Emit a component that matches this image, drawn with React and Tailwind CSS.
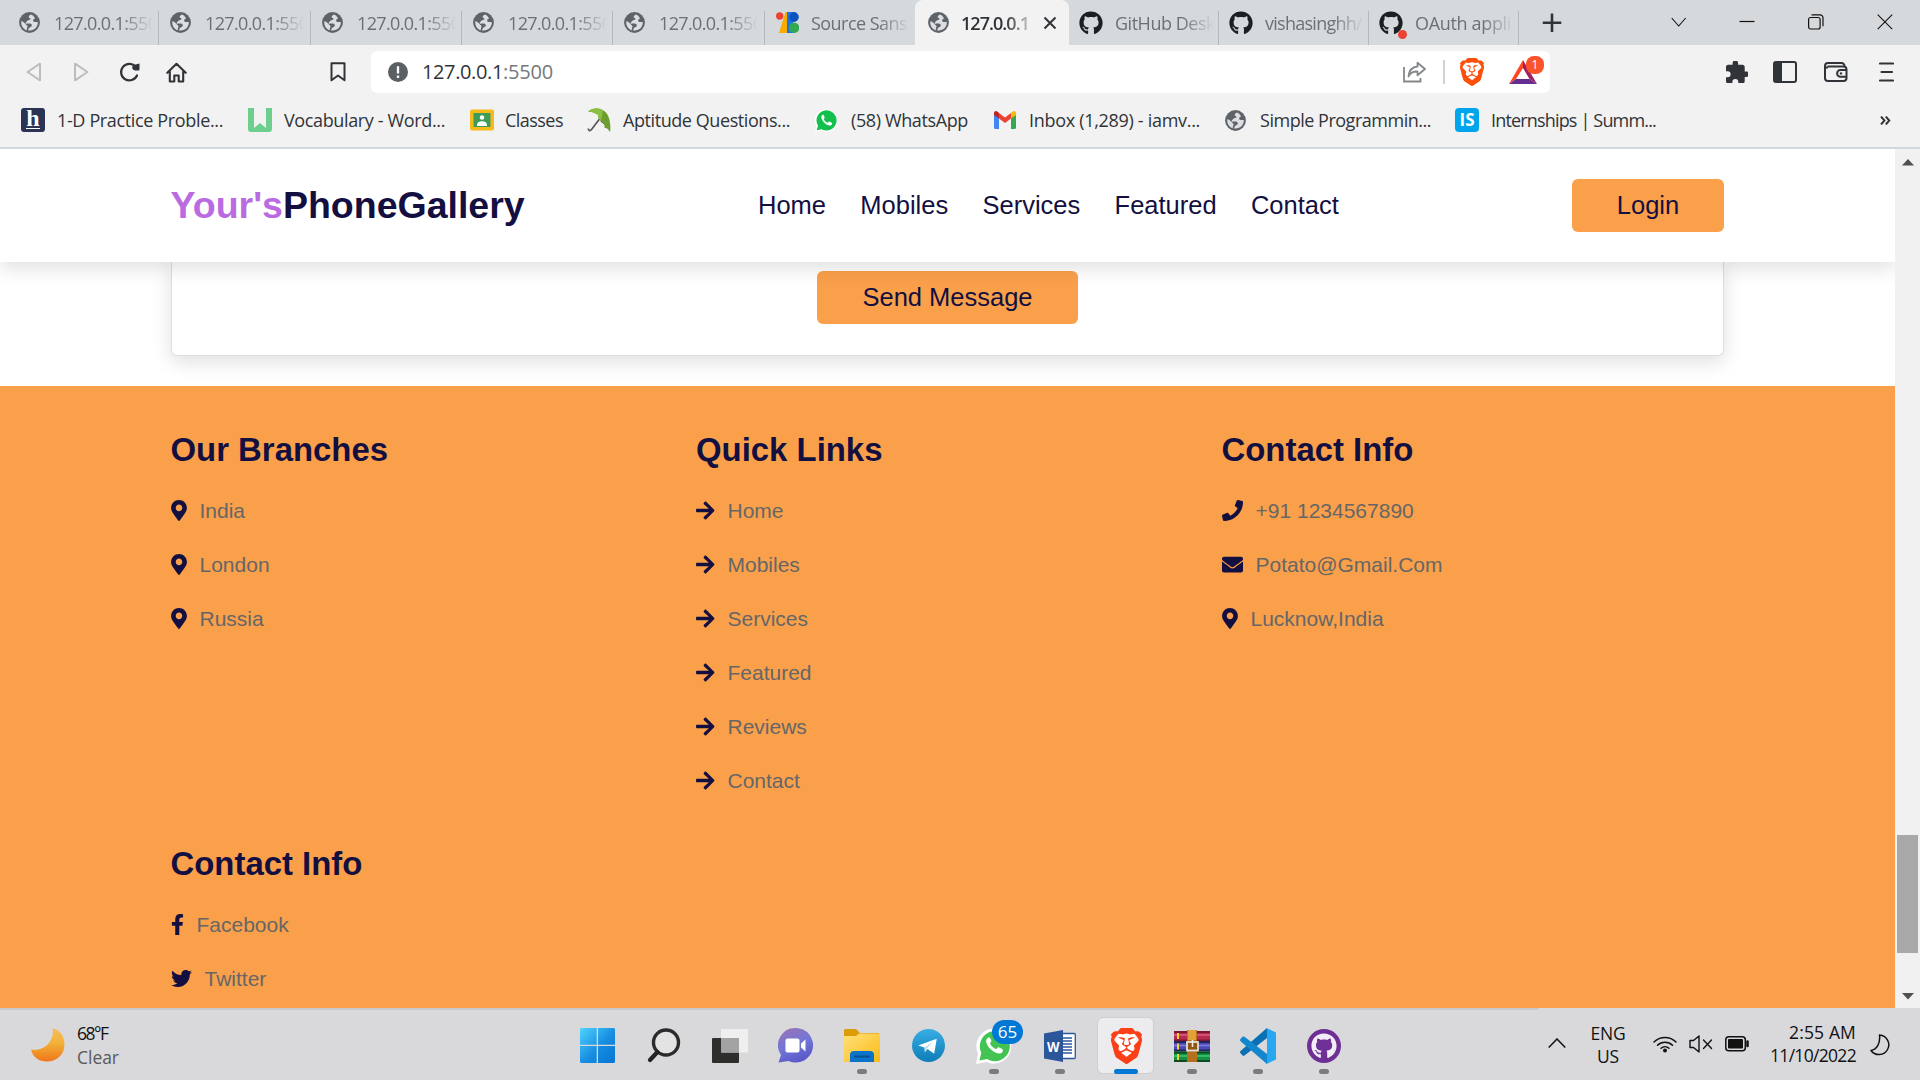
import React, { useLayoutEffect, useRef, useState } from "react";
import { FaMapMarkerAlt, FaArrowRight, FaPhone, FaEnvelope, FaFacebookF, FaTwitter, FaGithub } from "react-icons/fa";
import { SiBrave } from "react-icons/si";

/* Inline text whose letter spacing is adjusted so that it spans `w` pixels. */
function Fit({ w, className = "", children }) {
  const ref = useRef(null);
  const [ls, setLs] = useState(0);
  useLayoutEffect(() => {
    const natural = ref.current.getBoundingClientRect().width;
    setLs((w - natural) / children.length);
  }, [w, children]);
  return (
    <span ref={ref} className={"inline-block whitespace-pre " + className} style={{ letterSpacing: ls + "px" }}>
      {children}
    </span>
  );
}

const Globe = ({ className = "" }) => (
  <svg viewBox="0 0 21 21" className={"h-[21px] w-[21px] shrink-0 " + className}>
    <circle cx="10.5" cy="10.5" r="10.4" fill="#5f6368" />
    <path d="M11.8 2.4C9.6 3.6 9.1 5.2 10.2 5.8c1 .6 2.300 1.200.4 2-2 .7-2.500 1.300-3.700 2.600-.9 1 .2 1.500 1.500 1.200 2-.4 3.800-.2 4.300 1.100.5 1.300-.3 1.900-1.600 2.500-1.200.6-1.800 1.600-2 3.300 6 .8 9.900-3.400 9.700-8.400l-2.600-.1c-1.800.1-2.300-.9-1.900-2 .3-1 .9-1.300 1.800-1.500C14.900 4 13.500 2.900 11.800 2.400z" fill="#dcdfe2" />
    <path d="M2.300 9.300c1.600.2 3.200 1.300 4.200 2.600.9 1.200 1.900 1.200 2 2.500 0 1.100-.9 1.500-.8 4C4.200 17.300 1.800 13.500 2.300 9.300z" fill="#dcdfe2" />
  </svg>
);

const SourceFont = () => (
  <svg viewBox="0 0 23 21" className="h-[21px] w-[23px] shrink-0">
    <path d="M9.500 0H15v21H3z" fill="#f9ab00" />
    <circle cx="3.700" cy="4" r="3.700" fill="#ea4335" />
    <path d="M11 0h6.500a5 5 0 0 1 0 10H17v11h-6z" fill="#1a73e8" />
    <circle cx="18" cy="5" r="4.700" fill="#0d52bf" />
    <circle cx="18" cy="15.700" r="5.300" fill="#34a853" />
    <path d="M11 10h6.500a5.300 5.300 0 0 0-1 10.500L15 21h-4z" fill="#1a73e8" />
  </svg>
);

const Tab = ({ icon, title, w, width, iconLast }) => (
  <div className={"flex h-[45px] shrink-0 items-center pl-[11px] " + width}>
    <div className="flex w-[24px] shrink-0">{icon}</div>
    <div className="ml-[11px] w-[99px] shrink-0 overflow-hidden text-[18px] leading-[24px] text-[#6c7075] [mask-image:linear-gradient(90deg,#000_68%,transparent)]">
      <Fit w={w}>{title}</Fit>
    </div>
    {!iconLast && <div className="mt-auto ml-auto h-[34px] w-[1px] bg-[#b4b8bc]" />}
  </div>
);

const Octo = () => <FaGithub className="-ml-[1px] h-[24px] w-[24px] text-[#1b1f23]" />;

function TabStrip() {
  return (
    <div className="flex h-[45px] bg-[#d5d9dc]">
      <div className="flex pl-[8px]">
        <Tab icon={<Globe />} title="127.0.0.1:5500" w={113} width="w-[151px]" />
        <Tab icon={<Globe />} title="127.0.0.1:5500" w={113} width="w-[152px]" />
        <Tab icon={<Globe />} title="127.0.0.1:5500" w={113} width="w-[151px]" />
        <Tab icon={<Globe />} title="127.0.0.1:5500" w={113} width="w-[151px]" />
        <Tab icon={<Globe />} title="127.0.0.1:5500" w={113} width="w-[152px]" />
        <Tab icon={<SourceFont />} title="Source Sans" w={96} width="w-[150px]" iconLast />
        <div className="flex w-[154px] items-center rounded-t-[8px] bg-[#f2f2f2] pl-[13px]">
          <Globe />
          <div className="ml-[12px] w-[69px] text-[18px] leading-[24px] font-semibold text-[#303438] [mask-image:linear-gradient(90deg,#000_65%,#0003)]">
            <Fit w={68}>127.0.0.1</Fit>
          </div>
          <svg viewBox="0 0 14 14" className="ml-[13px] h-[14px] w-[14px]"><path d="M1.500 1.500l11 11M12.500 1.500l-11 11" stroke="#303438" strokeWidth="2" /></svg>
        </div>
        <Tab icon={<Octo />} title="GitHub Desk" w={100} width="w-[150px]" />
        <Tab icon={<Octo />} title="vishasinghh/" w={97} width="w-[150px]" />
        <Tab
          icon={<div className="relative"><Octo /><div className="absolute top-[19px] left-[18px] h-[9px] w-[9px] rounded-full bg-[#ea4335]" /></div>}
          title="OAuth appli" w={96} width="w-[150px]" />
      </div>
      <svg viewBox="0 0 20 20" className="mt-[13px] ml-[23px] h-[20px] w-[20px]"><path d="M10 .5v18.500M.8 9.800h18.500" stroke="#303438" strokeWidth="2.600" /></svg>
      <div className="ml-auto flex pr-[27px] pt-[14px]">
        <svg viewBox="0 0 16 16" className="h-[16px] w-[16px]"><path d="M.7 4l7 8 7-8" stroke="#111" fill="none" strokeWidth="1.100" /></svg>
        <svg viewBox="0 0 16 16" className="ml-[52px] h-[16px] w-[16px]"><path d="M.5 7.500h15" stroke="#111" fill="none" strokeWidth="1.200" /></svg>
        <svg viewBox="0 0 16 16" className="ml-[53px] h-[16px] w-[16px]"><rect x=".6" y="3.500" width="11.500" height="11.500" rx="2" stroke="#111" fill="none" strokeWidth="1.200" /><path d="M3.500.8h8.500a3 3 0 0 1 3 3v8.500" stroke="#111" fill="none" strokeWidth="1.200" /></svg>
        <svg viewBox="0 0 16 16" className="ml-[53px] h-[16px] w-[16px]"><path d="M.7.7l14.500 14.500M15.200.7L.7 15.200" stroke="#111" fill="none" strokeWidth="1.100" /></svg>
      </div>
    </div>
  );
}

const BraveLion = ({ className, color }) => (
  <div className={"relative shrink-0 " + className}>
    <svg viewBox="0 0 24 24" preserveAspectRatio="none" className="absolute inset-0 h-full w-full"><path d="M6 4h12l2 5-3 10-5 4-5-4L4 9z" fill="#fff" /></svg>
    <SiBrave preserveAspectRatio="none" viewBox="2 0 20 24" className={"absolute inset-0 h-full w-full " + color} />
  </div>
);

function Toolbar() {
  return (
    <div className="flex h-[54px] items-center bg-[#f2f2f2]">
      <svg viewBox="0 0 16 20" className="ml-[26px] h-[20px] w-[16px]"><path d="M14 1.700v16.600L1.500 10z" fill="none" stroke="#bdbdbd" strokeWidth="2" strokeLinejoin="round" /></svg>
      <svg viewBox="0 0 16 20" className="ml-[31px] h-[20px] w-[16px]"><path d="M2 1.700v16.600L14.500 10z" fill="none" stroke="#bdbdbd" strokeWidth="2" strokeLinejoin="round" /></svg>
      <svg viewBox="0 0 21 21" className="ml-[30px] h-[21px] w-[21px]"><path d="M16.500 4.500A8.300 8.300 0 1 0 18 13.500" fill="none" stroke="#303438" strokeWidth="2.200" strokeLinecap="round" /><path d="M20.500 1.500v6a1 1 0 0 1-1 .9h-3.500a3 3 0 0 1-1.500-5.500z" fill="#303438" /></svg>
      <svg viewBox="0 0 21 21" className="ml-[26px] h-[21px] w-[21px]"><path d="M1.300 10.800l9.200-9 9.200 9M3.800 9.500v10h4.500v-6h4.400v6h4.500v-10" fill="none" stroke="#303438" strokeWidth="2.100" strokeLinejoin="round" strokeLinecap="round" /></svg>
      <svg viewBox="0 0 16 20" className="ml-[143px] h-[20px] w-[16px]"><path d="M1.500 1.300h13v17L8 13.500l-6.500 4.800z" fill="none" stroke="#303438" strokeWidth="2" strokeLinejoin="round" /></svg>
      <div className="ml-[25px] flex h-[42px] w-[1179px] items-center rounded-[6px] bg-white">
        <svg viewBox="0 0 20 20" className="ml-[17px] h-[20px] w-[20px]"><circle cx="10" cy="10" r="10" fill="#5b6065" /><path d="M10 4.200v7.300M10 13.500v2.400" stroke="#fff" strokeWidth="2.300" /></svg>
        <div className="ml-[14px] text-[20px] leading-[28px] whitespace-pre text-[#303438]"><Fit w={81}>127.0.0.1</Fit><Fit w={50} className="text-[#74787c]">:5500</Fit></div>
        <svg viewBox="0 0 23 22" className="mr-[1px] ml-auto h-[22px] w-[23px]"><path d="M1 6v14.500h16.500V17" fill="none" stroke="#85888b" strokeWidth="1.800" /><path d="M14.500 1.700L22 8l-7.500 6.300v-3.800c-4.500-.2-7.500 1.500-9 5C6 9.800 9 6 14.500 5.500z" fill="none" stroke="#85888b" strokeWidth="1.800" strokeLinejoin="round" /></svg>
        <div className="ml-[16px] h-[24px] w-[2px] bg-[#d2d3d4]" />
        <BraveLion className="ml-[15px] h-[28px] w-[24px]" color="text-[#fb4f0a]" />
        <div className="relative mr-[13px] ml-[25px] h-[24px] w-[28px]">
          <svg viewBox="0 0 28 24" className="h-[24px] w-[28px]"><path d="M14 0L0 24h28z" fill="#fff" /><path d="M14 0L0 24l7-5 7-11z" fill="#ff4724" /><path d="M14 0v8l6.500 11 7.500 5z" fill="#9e1f63" /><path d="M0 24l7-5h13.500l7.500 5z" fill="#662d91" /></svg>
          <div className="absolute -top-[4px] left-[17px] flex h-[18px] w-[18px] items-center justify-center rounded-[8px] bg-[#fb542b] text-[12px] text-white">1</div>
        </div>
      </div>
      <svg viewBox="2 1.500 20 20" className="ml-[176px] h-[22px] w-[22px]"><path fill="#303438" d="M20.500 11H19V7c0-1.100-.9-2-2-2h-4V3.500a2.500 2.500 0 0 0-5 0V5H4c-1.100 0-2 .9-2 2v3.800h1.500a2.700 2.700 0 0 1 0 5.400H2V20c0 1.100.9 2 2 2h3.800v-1.500a2.700 2.700 0 0 1 5.400 0V22H17c1.100 0 2-.9 2-2v-4h1.500a2.500 2.500 0 0 0 0-5z" /></svg>
      <svg viewBox="0 0 24 22" className="ml-[25px] h-[22px] w-[24px]"><rect x="1" y="1" width="22" height="20" rx="2" fill="none" stroke="#303438" strokeWidth="2" /><path d="M1 1h8v20H1z" fill="#303438" /></svg>
      <svg viewBox="0 0 24 20" className="ml-[27px] h-[20px] w-[24px]"><path d="M3.500 4.500h16a3 3 0 0 1 3 3v8.500a3 3 0 0 1-3 3H4a3 3 0 0 1-3-3V4a3 3 0 0 1 3-3h13.500a3 3 0 0 1 3 3.500M1 5.500h3M22.500 8h-6a3.300 3.300 0 0 0 0 6.800h6" fill="none" stroke="#303438" strokeWidth="2" /><circle cx="17" cy="11.400" r="1.200" fill="#303438" /></svg>
      <svg viewBox="0 0 15 20" className="ml-[31px] h-[20px] w-[15px]"><path d="M1 1.500h13M2.500 10H13M1 18.500h13" stroke="#303438" strokeWidth="2.200" strokeLinecap="round" /></svg>
    </div>
  );
}

const Mark = ({ icon, title, w, width, tl = "ml-[13px]" }) => (
  <div className={"flex shrink-0 items-center " + width}>
    {icon}
    <Fit w={w} className={"text-[18px] leading-[24px] text-[#303438] " + tl}>{title}</Fit>
  </div>
);

function Bookmarks() {
  return (
    <div className="flex h-[50px] items-center border-b-2 border-[#d3d8dc] bg-[#f2f2f2] pb-[6px] pl-[21px]">
      <Mark width="w-[227px]" w={166} tl="ml-[12px]" title="1-D Practice Proble..." icon={
        <div className="flex h-[24px] w-[24px] justify-center rounded-[3px] bg-[#2c3454]"><span className="flex h-[21px] w-[14px] items-center justify-center border-b-[1.500px] border-white font-['Liberation_Serif'] text-[24px] leading-[20px] font-bold text-white">h</span></div>} />
      <Mark width="w-[222px]" w={161} title="Vocabulary - Word..." icon={
        <svg viewBox="0 0 24 24" className="h-[24px] w-[24px]"><path d="M0 0h6v20l6-5 6 5V0h6v21a3 3 0 0 1-3 3H3a3 3 0 0 1-3-3z" fill="#6ccf8e" /></svg>} tl="ml-[12px]" />
      <Mark width="w-[117px]" w={58} title="Classes" tl="ml-[11px]" icon={
        <svg viewBox="0 0 24 24" className="h-[24px] w-[24px]"><rect y="1.500" width="24" height="21" rx="2" fill="#f6bb1b" /><rect x="3.500" y="5" width="17" height="14" fill="#3f9b58" /><circle cx="12" cy="9.500" r="2.200" fill="#fff" /><path d="M7 16.500c0-4.500 10-4.500 10 0v1.500H7z" fill="#fff" /></svg>} />
      <Mark width="w-[228px]" w={167} title="Aptitude Questions..." tl="ml-[12px]" icon={
        <svg viewBox="0 0 24 24" className="h-[24px] w-[24px]"><path d="M12.500 11L4.500 21.500c-1.500 1.800-3.500 1-3-1" fill="none" stroke="#555" strokeWidth="1.700" /><path d="M13.500 13l9.500 7" stroke="#444" strokeWidth="1" /><path d="M1 3.500C8-2 20 0 22.500 12c.5 3.500 1.500 7 .5 12-2-3-3-4.500-5.500-4 .5-3-1-5.500-3.500-7-1.500-1-3.500-4-3-6.500-3-.5-3.500-2.500-10-3z" fill="#6d9d2d" /><path d="M1 3.500C6-.5 12-.5 16 2.500L14 13c-1.500-1-3.500-4-3-6.500C8 6 7.500 4 1 3.500z" fill="#8abf42" /></svg>} />
      <Mark width="w-[179px]" w={117} title="(58) WhatsApp" icon={
        <svg viewBox="0 0 24 24" className="h-[23px] w-[23px]"><path d="M0 24l1.500-6A11.700 11.700 0 1 1 6 22.400z" fill="#fff" /><path d="M1.800 22.200l1.300-4.800a10.500 10.500 0 1 1 3.700 3.600z" fill="#12c04b" /><path d="M7.500 6.500c-2 2-.3 5 2 7.500s6 4 7.700 2.600c1-1 .8-2-.2-2.500l-2-1c-.8-.3-1.200 1.300-1.900 1.200-1.200-.3-3.500-2.400-3.900-3.700 0-.7 1.200-1.200.8-2.200l-.9-1.900c-.4-.7-1.100-.6-1.600 0z" fill="#fff" /></svg>} />
      <Mark width="w-[231px]" w={171} title="Inbox (1,289) - iamv..." icon={
        <svg viewBox="0 0 22 18" className="h-[18px] w-[22px]"><path d="M0 3l5 3.700V18H1.500A1.500 1.500 0 0 1 0 16.500z" fill="#4285f4" /><path d="M22 3l-5 3.700V18h3.500a1.500 1.500 0 0 0 1.500-1.500z" fill="#34a853" /><path d="M17 2v5.500L22 4V2.200c0-2-2-2.800-3.500-1.500z" fill="#fbbc04" /><path d="M5 2v5.500L0 4V2.200C0 .2 2-.6 3.500.7z" fill="#c5221f" /><path d="M5 7.500V2l6 4.500L17 2v5.500l-6 4.500z" fill="#ea4335" /></svg>} />
      <Mark width="w-[230px]" w={171} tl="ml-[14px]" title="Simple Programmin..." icon={<Globe />} />
      <Mark width="w-[201px]" w={165} title="Internships | Summ..." tl="ml-[12px]" icon={
        <div className="flex h-[24px] w-[24px] items-center justify-center rounded-[4px] bg-[#00a5ec] text-[17px] font-bold text-white">IS</div>} />
      <svg viewBox="0 0 11 9" className="mr-[29px] ml-auto h-[9px] w-[11px]"><path d="M1 .5l3.500 4L1 8.500M5.800.5l3.500 4-3.500 4" fill="none" stroke="#303438" strokeWidth="1.900" /></svg>
    </div>
  );
}

const Item = ({ icon: Icon, size, children }) => (
  <div className="flex h-[54px] items-center">
    <Icon className={"shrink-0 text-[#130f40] " + size} />
    <span className="mt-[2px] ml-[13px] text-[21px] leading-[26px] whitespace-pre text-[#666]">{children}</span>
  </div>
);
const H = ({ children }) => <h3 className="mb-[15px] text-[32.900px] leading-[36px] font-bold text-[#130f40]">{children}</h3>;
const PIN = "h-[21px] w-[16px]";
const SQ = "h-[21px] w-[21px]";

const Btn = ({ children, className }) => (
  <button className={"h-[53px] rounded-[6px] bg-[#faa04b] text-[25.500px] text-[#130f40] " + className}>{children}</button>
);

function Page() {
  return (
    <div className="flex h-[859px] font-['Liberation_Sans',Arial,sans-serif]">
      <div className="flex w-[1895px] flex-col overflow-hidden bg-white">
        <header className="z-10 flex h-[113px] shrink-0 items-center bg-white pr-[171px] pl-[170.500px] shadow-[0_6px_19px_rgba(0,0,0,0.13)]">
          <div className="w-[587.500px] pb-[2px] text-[37.500px] leading-[44px] font-bold text-[#130f40]"><span className="text-[#bb6be2]">Your's</span>PhoneGallery</div>
          <nav className="flex gap-[34.300px] pb-[2px] text-[25.500px] leading-[30px] text-[#130f40]">
            <a>Home</a><a>Mobiles</a><a>Services</a><a>Featured</a><a>Contact</a>
          </nav>
          <Btn className="ml-auto w-[152px]">Login</Btn>
        </header>
        <section className="h-[124px] shrink-0 px-[171px]">
          <div className="flex h-[94px] justify-center rounded-b-[6px] border border-t-0 border-[#dedede] pt-[9px] shadow-[0_6px_19px_rgba(0,0,0,0.13)]">
            <Btn className="w-[261px]">Send Message</Btn>
          </div>
        </section>
        <footer className="grid h-[622px] shrink-0 grid-cols-[525.500px_525.500px_1fr] grid-rows-[414px_1fr] bg-[#faa04b] pt-[46px] pl-[170.500px]">
          <div><H>Our Branches</H><Item icon={FaMapMarkerAlt} size={PIN}>India</Item><Item icon={FaMapMarkerAlt} size={PIN}>London</Item><Item icon={FaMapMarkerAlt} size={PIN}>Russia</Item></div>
          <div><H>Quick Links</H>{["Home", "Mobiles", "Services", "Featured", "Reviews", "Contact"].map((t) => <Item key={t} icon={FaArrowRight} size="h-[21px] w-[18.500px]">{t}</Item>)}</div>
          <div><H>Contact Info</H><Item icon={FaPhone} size={SQ}>+91 1234567890</Item><Item icon={FaEnvelope} size={SQ}>Potato@Gmail.Com</Item><Item icon={FaMapMarkerAlt} size={PIN}>Lucknow,India</Item></div>
          <div><H>Contact Info</H><Item icon={FaFacebookF} size="h-[21px] w-[13px]">Facebook</Item><Item icon={FaTwitter} size={SQ}>Twitter</Item></div>
        </footer>
      </div>
      <div className="flex w-[25px] flex-col items-center bg-[#f1f1f1]">
        <svg viewBox="0 0 12 7" className="mt-[10px] h-[7px] w-[12px]"><path d="M6 0l6 6.500H0z" fill="#505050" /></svg>
        <div className="mt-[669px] h-[118px] w-[21px] bg-[#a8a8a8]" />
        <svg viewBox="0 0 12 7" className="mt-[40px] h-[7px] w-[12px]"><path d="M6 6.500L12 0H0z" fill="#505050" /></svg>
      </div>
    </div>
  );
}

const App66 = ({ children, dot }) => (
  <div className="relative flex h-[72px] w-[66px] items-center justify-center pt-[3px]">
    {children}
    {dot && <div className="absolute bottom-[6px] left-[28px] h-[5px] w-[10px] rounded-full bg-[#7b7b7d]" />}
  </div>
);

function Taskbar() {
  return (
    <div className="flex h-[72px] bg-[#d9d9dc]">
      <div className="flex w-[565px] border-t-2 border-[#c8c9cb] pl-[31px]">
        <svg viewBox="0 0 34 34" className="mt-[18px] h-[34px] w-[34px]">
          <defs><linearGradient id="moon" x1="0" y1="0" x2="0" y2="1"><stop offset="0" stopColor="#f6bd60" /><stop offset=".45" stopColor="#f2b138" /><stop offset="1" stopColor="#f0761a" /></linearGradient></defs>
          <path d="M21.500 0A18 18 0 0 1 .3 21.500C1 29 8 33.500 16 33.500c10 0 17.500-7 17.500-17C33.500 8 29 2 21.500 0z" fill="url(#moon)" />
        </svg>
        <div className="mt-[11px] ml-[12px] flex flex-col text-[17.500px] leading-[24px] text-[#111]"><Fit w={36}>68°F</Fit><Fit w={42} className="text-[#58595b]">Clear</Fit></div>
      </div>
      <div className="flex w-[974px] border-t-2 border-[#c8c9cb]">
       <div className="-mt-[2px] flex">
        <App66>
          <svg viewBox="0 0 35 35" className="mr-[2px] h-[35px] w-[35px]"><defs><linearGradient id="win" x1="0" y1="0" x2="1" y2="1"><stop offset="0" stopColor="#50d3ff" /><stop offset=".55" stopColor="#168de0" /><stop offset="1" stopColor="#0676d2" /></linearGradient></defs><path d="M1 0h15.700v16.700H0V1zM18 0h16l1 1v15.700H18zM0 18h16.700v17H1l-1-1zM18 18h17v16l-1 1H18z" fill="url(#win)" /></svg>
        </App66>
        <App66>
          <svg viewBox="0 0 34 35" className="h-[35px] w-[34px]"><circle cx="19" cy="14.500" r="12.500" fill="#e3e3e4" stroke="#2b2b2b" strokeWidth="3.400" /><path d="M10.500 24L3 32" stroke="#222" strokeWidth="4.200" strokeLinecap="round" /></svg>
        </App66>
        <App66>
          <svg viewBox="0 0 36 34" className="mr-[1px] h-[34px] w-[36px]"><rect y="9" width="27" height="25" rx="1" fill="#2e2e2d" /><rect x="9" width="27" height="23.500" rx="1" fill="#f0f0f0" fillOpacity=".95" /><rect x="9" y="9" width="18" height="14.500" fill="#a3a3a3" /></svg>
        </App66>
        <App66>
          <svg viewBox="0 0 35 35" className="mr-[2px] h-[35px] w-[35px]"><defs><linearGradient id="chat" x1=".2" y1="0" x2=".6" y2="1"><stop offset="0" stopColor="#9873b5" /><stop offset=".5" stopColor="#7277d8" /><stop offset="1" stopColor="#5a55c8" /></linearGradient></defs><path d="M17.500 0a17.300 17.300 0 1 1-7 33l-10 1.500L3 27A17.300 17.300 0 0 1 17.500 0z" fill="url(#chat)" /><rect x="7.500" y="10.500" width="14" height="14" rx="2" fill="#fff" /><path d="M23 15.500l4.500-4v12l-4.500-4z" fill="#fff" /></svg>
        </App66>
        <App66 dot>
          <svg viewBox="0 0 36 34" className="h-[34px] w-[36px]"><defs><linearGradient id="fold" x1="0" y1="0" x2="1" y2="1"><stop offset="0" stopColor="#ffe07a" /><stop offset="1" stopColor="#fcbb16" /></linearGradient></defs><path d="M1 0h11l4 4h19v6H0V1z" fill="#dc9c08" /><path d="M0 7h12l3-2.500h20l1 1V33H0z" fill="url(#fold)" /><path d="M6 33v-7a4 4 0 0 1 4-4h16a4 4 0 0 1 4 4v7z" fill="#0b74c9" /><path d="M11 27.500h14" stroke="#084f92" strokeWidth="2" strokeLinecap="round" /></svg>
        </App66>
        <App66>
          <svg viewBox="0 0 32 32" className="h-[33px] w-[33px]"><defs><linearGradient id="tg" x1="0" y1="0" x2="0" y2="1"><stop offset="0" stopColor="#37aee2" /><stop offset="1" stopColor="#0e7cb8" /></linearGradient></defs><circle cx="16" cy="16" r="16" fill="url(#tg)" /><path d="M6 16L24 9.500 21.500 24 15 19.500l-2.500 3L12 18z" fill="#fff" /><path d="M12.500 18l8-6-6 7-2 3.500z" fill="#b8d8e8" /></svg>
        </App66>
        <App66 dot>
          <svg viewBox="0 0 36 36" className="h-[36px] w-[36px]"><path d="M0 36l2-10.500A17.500 17.500 0 1 1 10.500 34z" fill="#fff" /><path d="M3.500 32.500l1.800-7.800A15 15 0 1 1 11 31z" fill="#43c351" /><path d="M11.500 10c-3 3-.5 7.500 3 11s9 6 11.500 3.500c1.500-1.500 1.200-3-.3-3.700l-3-1.500c-1.200-.5-1.800 2-2.800 1.800-1.800-.5-5.300-3.700-5.800-5.600 0-1 1.800-1.800 1.200-3.200L14 10c-.6-1-1.700-.9-2.500 0z" fill="#fff" /></svg>
          <div className="absolute top-[12px] left-[31px] flex h-[24px] w-[31px] items-center justify-center rounded-full bg-[#0078d4] pb-px text-[17px] text-white">65</div>
        </App66>
        <App66 dot>
          <svg viewBox="0 0 32 32" className="h-[32px] w-[32px]"><rect x="17" y="3.500" width="14.300" height="25" rx="1" fill="#fff" stroke="#2b579a" strokeWidth="1.300" /><path d="M18 8h10M18 11h10M18 14h10M18 17h10M18 20h10M18 23h10" stroke="#2b579a" strokeWidth="1.300" /><path d="M0 3.500L19 0v32L0 28.500z" fill="#2b579a" /><text x="3" y="21.500" fontSize="14" fontWeight="700" fill="#fff" fontFamily="Open Sans" textLength="12.500" lengthAdjust="spacingAndGlyphs">W</text></svg>
        </App66>
        <App66>
          <div className="absolute top-[9px] left-[4px] h-[57px] w-[57px] rounded-[6px] border border-[#cfcfd1] bg-[#ececee]" />
          <BraveLion className="h-[36px] w-[31px]" color="text-[#fb3f16]" />
          <div className="absolute bottom-[6px] left-[21px] h-[5px] w-[24px] rounded-full bg-[#0078d4]" />
        </App66>
        <App66 dot>
          <svg viewBox="0 0 36 32" className="h-[32px] w-[36px]"><rect y="1" width="36" height="10" rx="1" fill="#b52a4e" /><path d="M0 2h36M0 10.500h36" stroke="#7a1730" strokeWidth="2" /><path d="M0 5h36" stroke="#d9627f" strokeWidth="1.500" /><rect y="11" width="36" height="10" rx="1" fill="#4b49b5" /><path d="M0 12h36M0 20.500h36" stroke="#25235e" strokeWidth="2.200" /><path d="M0 15.500h36" stroke="#7f7de0" strokeWidth="1.500" /><rect y="21.500" width="36" height="10" rx="1" fill="#159044" /><path d="M0 22.500h36M0 31h36" stroke="#0b4a22" strokeWidth="2" /><path d="M0 26h36" stroke="#3fc76f" strokeWidth="1.500" /><path d="M4 3v6M4 13.500v6M4 24v6" stroke="#f5d52a" strokeWidth="2" /><rect x="13" y="0" width="10" height="32" fill="#b46f1f" /><rect x="14" y="0" width="8" height="10" fill="#dfa138" /><rect x="13" y="12" width="11" height="8.500" fill="#8f5516" stroke="#e4e0d8" strokeWidth="1.800" /><path d="M18.500 10v7" stroke="#f2eee6" strokeWidth="1.600" /></svg>
        </App66>
        <App66 dot>
          <svg viewBox="0 0 36 36" className="h-[36px] w-[36px]"><path d="M27 0v10L4.500 27.500c-.7.500-1.500.4-2 0L.5 25.300c-.7-.7-.6-1.700 0-2.300z" fill="#0a70b4" /><path d="M27 36V26L4.500 8.800c-.7-.5-1.500-.4-2 0L.5 10.900c-.7.700-.6 1.700 0 2.300z" fill="#1287cd" /><path d="M26.500 0L36 4.500v27L26.500 36c-.6.1-1-.1-1.500-.6.800.6 2 .1 2-1V1.500c0-1-1.200-1.600-2-1 .5-.5.900-.6 1.500-.5z" fill="#27a6f2" /></svg>
        </App66>
        <App66 dot>
          <div className="flex h-[34px] w-[34px] items-center justify-center rounded-full bg-[#6e2f96]"><FaGithub className="h-[26px] w-[26px] text-[#f1ecf5]" /></div>
        </App66>
       </div>
      </div>
      <div className="flex flex-1 pl-[9px] text-[#111]">
        <svg viewBox="0 0 18 10" className="mt-[30px] h-[10px] w-[18px]"><path d="M.7 9.500L9 1l8.300 8.500" fill="none" stroke="#111" strokeWidth="1.500" /></svg>
        <div className="mt-[14px] ml-[23px] flex w-[38px] flex-col items-center text-[17.500px] leading-[23px]"><Fit w={35}>ENG</Fit><Fit w={22}>US</Fit></div>
        <svg viewBox="0 0 24 18" className="mt-[27px] ml-[26px] h-[18px] w-[24px]"><path d="M1 7a15.500 15.500 0 0 1 22 0M4.500 10.300a10.700 10.700 0 0 1 15 0M8 13.300a6 6 0 0 1 8 0" fill="none" stroke="#111" strokeWidth="1.500" strokeLinecap="round" /><circle cx="12" cy="15.500" r="2" fill="#111" /></svg>
        <svg viewBox="0 0 24 18" className="mt-[27px] ml-[12px] h-[18px] w-[24px]"><path d="M1 5.500h3.500L10 1v16l-5.500-4.500H1z" fill="none" stroke="#111" strokeWidth="1.400" strokeLinejoin="round" /><path d="M14.500 5l8 8.500M22.500 5l-8 8.500" stroke="#111" strokeWidth="1.400" strokeLinecap="round" /></svg>
        <svg viewBox="0 0 24 16" className="mt-[28px] ml-[12px] h-[16px] w-[24px]"><rect x=".8" y=".8" width="19.500" height="14" rx="3" fill="none" stroke="#111" strokeWidth="1.500" /><rect x="3" y="3" width="15" height="9.600" rx="1" fill="#111" /><path d="M22.500 5.500v4.500" stroke="#111" strokeWidth="2.500" strokeLinecap="round" /></svg>
        <div className="mt-[13px] ml-[19px] flex w-[88px] flex-col items-end text-[17.500px] leading-[23px]"><Fit w={67}>2:55 AM</Fit><Fit w={86}>11/10/2022</Fit></div>
        <svg viewBox="0 0 20 22" className="mt-[26px] ml-[14px] h-[22px] w-[20px]"><path d="M9.500 1A9.800 9.800 0 1 1 1 16.500C7 15.500 10.500 9 9.500 1z" fill="none" stroke="#111" strokeWidth="1.500" strokeLinejoin="round" /></svg>
      </div>
    </div>
  );
}

export default function App() {
  return (
    <div className="h-[1080px] w-[1920px] overflow-hidden bg-white font-['Open_Sans','Noto_Sans',sans-serif]">
      <TabStrip />
      <Toolbar />
      <Bookmarks />
      <Page />
      <Taskbar />
    </div>
  );
}
